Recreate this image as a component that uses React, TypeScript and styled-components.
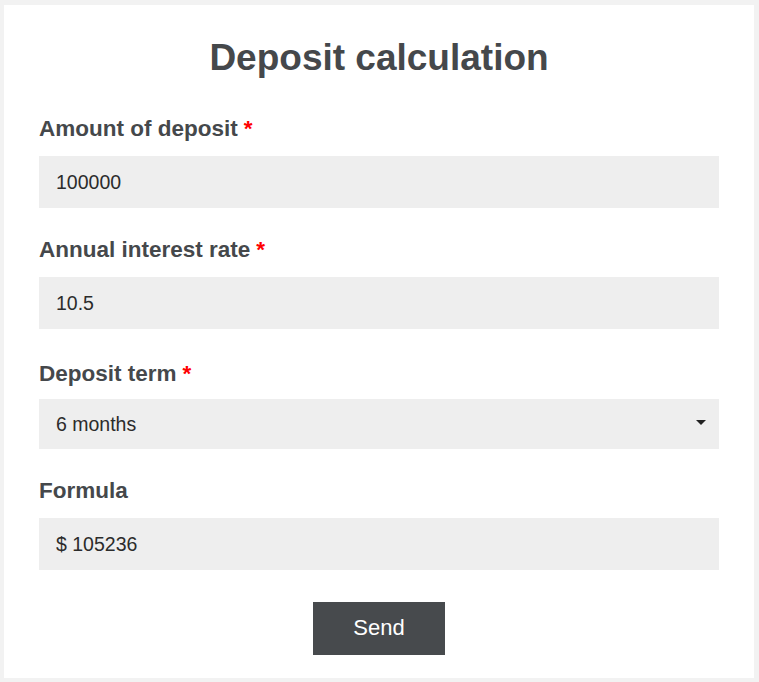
import React, { useState } from "react";
import styled, { createGlobalStyle } from "styled-components";

const GlobalStyle = createGlobalStyle`
  html, body {
    margin: 0;
    padding: 0;
    background: #f2f2f2;
  }
  body {
    font-family: "Liberation Sans", Arial, Helvetica, sans-serif;
  }
  * { box-sizing: border-box; }
`;

const Page = styled.div`
  padding: 5px 5px 4px 4px;
`;

const Card = styled.form`
  width: 750px;
  height: 673px;
  background: #ffffff;
  padding: 32px 35px 0 35px;
  display: flex;
  flex-direction: column;
`;

const Title = styled.h1`
  margin: 0 0 37px 0;
  font-size: 37px;
  line-height: 42px;
  font-weight: 700;
  color: #45484b;
  text-align: center;
`;

const Field = styled.div<{ $gap?: number }>`
  display: flex;
  flex-direction: column;
  margin-bottom: ${(p) => (p.$gap ?? 29)}px;
`;

const Label = styled.label<{ $mb?: number }>`
  font-size: 22.5px;
  line-height: 25px;
  font-weight: 700;
  color: #45484b;
  margin-bottom: ${(p) => (p.$mb ?? 15)}px;
`;

const Required = styled.span`
  color: #ff0000;
  margin-left: 6px;
`;

const Input = styled.input`
  height: 52px;
  width: 100%;
  border: none;
  outline: none;
  background: #eeeeee;
  padding: 0 17px;
  font-family: "Liberation Sans", Arial, Helvetica, sans-serif;
  font-size: 19.5px;
  color: #2b2b2b;
`;

const SelectWrap = styled.div`
  position: relative;
  width: 100%;
  &::after {
    content: "";
    position: absolute;
    right: 13px;
    top: 21px;
    width: 0;
    height: 0;
    border-left: 5px solid transparent;
    border-right: 5px solid transparent;
    border-top: 5px solid #222;
    pointer-events: none;
  }
`;

const Select = styled.select`
  appearance: none;
  -webkit-appearance: none;
  height: 50px;
  width: 100%;
  border: none;
  outline: none;
  border-radius: 0;
  background: #eeeeee;
  padding: 0 17px;
  font-family: "Liberation Sans", Arial, Helvetica, sans-serif;
  font-size: 19.5px;
  color: #2b2b2b;
`;

const ButtonRow = styled.div`
  display: flex;
  justify-content: center;
  margin-top: 3px;
`;

const SendButton = styled.button`
  width: 132px;
  height: 53px;
  border: none;
  background: #474a4d;
  color: #ffffff;
  font-family: "Liberation Sans", Arial, Helvetica, sans-serif;
  font-size: 22px;
  padding: 0 0 1px 0;
  cursor: pointer;
`;

export default function App() {
  const [amount, setAmount] = useState("100000");
  const [rate, setRate] = useState("10.5");
  const [term, setTerm] = useState("6");
  return (
    <Page>
      <GlobalStyle />
      <Card onSubmit={(e) => e.preventDefault()}>
        <Title>Deposit calculation</Title>
        <Field>
          <Label>
            Amount of deposit<Required>*</Required>
          </Label>
          <Input value={amount} onChange={(e) => setAmount(e.target.value)} />
        </Field>
        <Field $gap={32}>
          <Label>
            Annual interest rate<Required>*</Required>
          </Label>
          <Input value={rate} onChange={(e) => setRate(e.target.value)} />
        </Field>
        <Field $gap={29}>
          <Label $mb={13}>
            Deposit term<Required>*</Required>
          </Label>
          <SelectWrap>
            <Select value={term} onChange={(e) => setTerm(e.target.value)}>
              <option value="3">3 months</option>
              <option value="6">6 months</option>
              <option value="12">12 months</option>
            </Select>
          </SelectWrap>
        </Field>
        <Field $gap={29}>
          <Label>Formula</Label>
          <Input value="$ 105236" readOnly />
        </Field>
        <ButtonRow>
          <SendButton type="submit">Send</SendButton>
        </ButtonRow>
      </Card>
    </Page>
  );
}
